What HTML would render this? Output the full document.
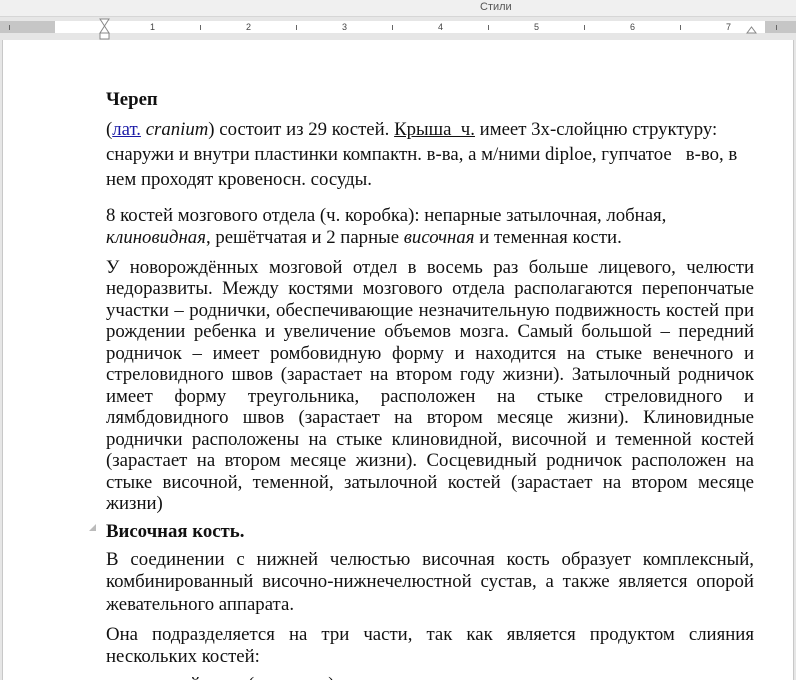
<!DOCTYPE html>
<html><head><meta charset="utf-8"><style>
html,body{margin:0;width:796px;height:680px;overflow:hidden;}
body{background:#e6e6e6;position:relative;font-family:"Liberation Serif",serif;}
.top{position:absolute;left:0;top:0;width:796px;height:16px;background:#f0f0f0;border-bottom:1px solid #d6d6d6;}
.top span{position:absolute;left:480px;top:1px;font:11px "Liberation Sans",sans-serif;color:#555;}
.ruler{position:absolute;left:0;top:21px;width:796px;height:12px;background:#fff;}
.rg{position:absolute;top:21px;height:12px;background:#c6c6c6;}
.page{position:absolute;left:2px;top:40px;width:790px;height:640px;background:#fff;border-left:1px solid #c8c8c8;border-right:1px solid #c8c8c8;}
.c{position:absolute;left:0;top:1px;width:796px;height:679px;overflow:hidden;}
.l{position:absolute;left:106px;width:648px;font-size:18.8px;line-height:20px;color:#111;white-space:nowrap;}
.j{text-align:justify;text-align-last:justify;}
.n{font-family:"Liberation Sans",sans-serif;font-size:9px;color:#444;position:absolute;top:22px;}
.tl{position:absolute;width:1px;height:5px;background:#666;top:25px;}
</style></head><body>
<div class="top"><span>Стили</span></div>
<div class="ruler"></div>
<div class="rg" style="left:0;width:55px"></div>
<div class="rg" style="left:765px;width:31px"></div>
<div class="n" style="left:150px">1</div><div class="n" style="left:246px">2</div><div class="n" style="left:342px">3</div><div class="n" style="left:438px">4</div><div class="n" style="left:534px">5</div><div class="n" style="left:630px">6</div><div class="n" style="left:726px">7</div>
<div class="tl" style="left:200px"></div><div class="tl" style="left:296px"></div><div class="tl" style="left:392px"></div><div class="tl" style="left:488px"></div><div class="tl" style="left:584px"></div><div class="tl" style="left:680px"></div><div class="tl" style="left:9px"></div><div class="tl" style="left:776px"></div>
<svg style="position:absolute;left:99px;top:18px" width="12" height="22"><path d="M1 1H10L5.5 8ZM5.5 8L1 15H10Z" fill="#fff" stroke="#888"/><rect x="1" y="15" width="9" height="6" fill="#fff" stroke="#888"/></svg>
<svg style="position:absolute;left:746px;top:26px" width="12" height="8"><path d="M1 7L5.5 1L10 7Z" fill="#fff" stroke="#888"/></svg>
<div class="page"></div>
<div class="c">
<div class="l" style="top:89px;font-weight:bold">Череп</div>
<div class="l" style="top:119px">(<span style="color:#1a1aa6;text-decoration:underline">лат.</span> <i>cranium</i>) состоит из 29 костей. <u>Крыша&nbsp; ч.</u> имеет 3х-слойцню структуру:</div>
<div class="l" style="top:144px">снаружи и внутри пластинки компактн. в-ва, а м/ними diploe, гупчатое&nbsp;&nbsp; в-во, в</div>
<div class="l" style="top:169px">нем проходят кровеносн. сосуды.</div>
<div class="l" style="top:205px">8 костей мозгового отдела (ч. коробка): непарные затылочная, лобная,</div>
<div class="l" style="top:227px"><i>клиновидная</i>, решётчатая и 2 парные <i>височная</i> и теменная кости.</div>
<div class="l j" style="top:257px">У новорождённых мозговой отдел в восемь раз больше лицевого, челюсти</div>
<div class="l j" style="top:278px">недоразвиты. Между костями мозгового отдела располагаются перепончатые</div>
<div class="l j" style="top:300px">участки – роднички, обеспечивающие незначительную подвижность костей при</div>
<div class="l j" style="top:321px">рождении ребенка и увеличение объемов мозга. Самый большой – передний</div>
<div class="l j" style="top:343px">родничок – имеет ромбовидную форму и находится на стыке венечного и</div>
<div class="l j" style="top:364px">стреловидного швов (зарастает на втором году жизни). Затылочный родничок</div>
<div class="l j" style="top:386px">имеет форму треугольника, расположен на стыке стреловидного и</div>
<div class="l j" style="top:407px">лямбдовидного швов (зарастает на втором месяце жизни). Клиновидные</div>
<div class="l j" style="top:429px">роднички расположены на стыке клиновидной, височной и теменной костей</div>
<div class="l j" style="top:450px">(зарастает на втором месяце жизни). Сосцевидный родничок расположен на</div>
<div class="l j" style="top:472px">стыке височной, теменной, затылочной костей (зарастает на втором месяце</div>
<div class="l" style="top:493px">жизни)</div>
<svg style="position:absolute;left:89px;top:523px" width="8" height="8"><path d="M7 0V7H0Z" fill="#bbb"/></svg>
<div class="l" style="top:521px;font-weight:bold">Височная кость.</div>
<div class="l j" style="top:549px">В соединении с нижней челюстью височная кость образует комплексный,</div>
<div class="l j" style="top:571px">комбинированный височно-нижнечелюстной сустав, а также является опорой</div>
<div class="l" style="top:594px">жевательного аппарата.</div>
<div class="l j" style="top:624px">Она подразделяется на три части, так как является продуктом слияния</div>
<div class="l" style="top:646px">нескольких костей:</div>
<div class="l" style="top:674px;left:130px">–&nbsp; чешуйчатая (squamosa);</div>
</div>
</body></html>
